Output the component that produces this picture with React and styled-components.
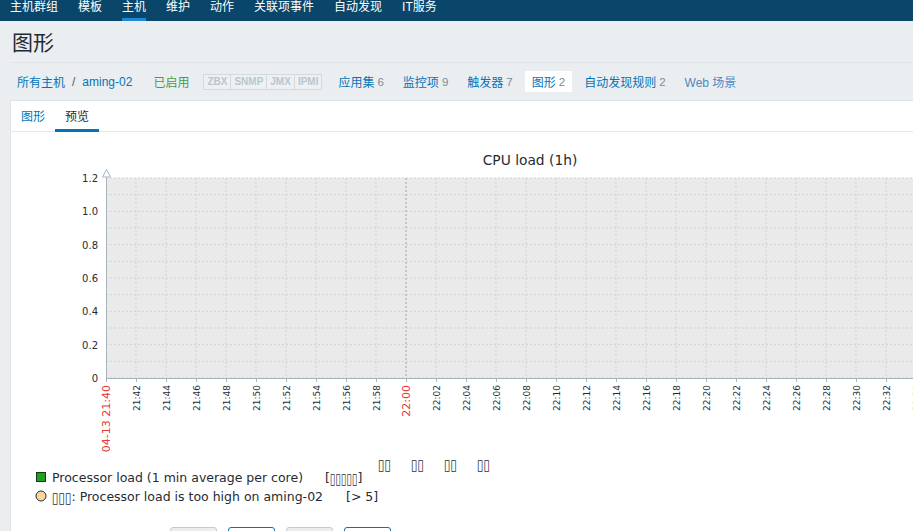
import React from 'react'
import styled, { createGlobalStyle, css } from 'styled-components'

const GlobalStyle = createGlobalStyle`
  body {
    margin: 0;
    background: #ebeef0;
    overflow: hidden;
    font-family: "Liberation Sans", Arial, "Noto Sans CJK SC", sans-serif;
    font-size: 12px;
    color: #1f2c33;
  }
`

const TopNav = styled.ul`
  display: flex;
  margin: 0;
  padding: 0;
  list-style: none;
  height: 21px;
  background: #0a466a;
`

const TopItem = styled.li`
  position: relative;
  padding: 0 10px;
  color: #fff;
  line-height: 14px;
  white-space: nowrap;

  ${p => p.$active && css`
    &::after {
      content: '';
      position: absolute;
      left: 0;
      right: 0;
      bottom: 0;
      margin: 0 10px;
      height: 3px;
      background: #1e88d0;
    }
  `}
`

const Header = styled.div`
  margin-left: 10px;
  border-bottom: 1px solid #dfe4e7;
  height: 41px;
`

const Title = styled.h1`
  margin: 0;
  padding: 10px 0 0 2px;
  font-size: 21px;
  line-height: 24px;
  font-weight: normal;
  color: #1f2c33;
`

const FilterRow = styled.div`
  display: flex;
  align-items: center;
  gap: 5px;
  height: 37px;
  padding-left: 10px;
`

const Crumbs = styled.div`
  display: flex;
  align-items: center;
  margin-right: 2px;
`

const Sep = styled.span`
  color: #5a5a5a;
`

const Item = styled.span`
  display: inline-flex;
  align-items: center;
  height: 21px;
  padding: 0 7px;
  color: ${p => p.$color || '#0275b8'};
  white-space: nowrap;
  background: ${p => (p.$active ? '#fff' : 'transparent')};
`

const Count = styled.span`
  margin-left: 3px;
  font-size: 11.5px;
  color: #768d99;
`

const Status = styled.div`
  display: flex;
  height: 14px;
  margin: 0 4px 0 2px;
  border: 1px solid #d3dade;
`

const StatusCell = styled.span`
  display: flex;
  align-items: center;
  padding: 0 3px;
  background: #eef1f3;
  color: #b9c6cd;
  font-size: 10px;
  font-weight: bold;
  & + & {
    border-left: 1px solid #d3dade;
  }
`

const Panel = styled.div`
  margin-left: 10px;
  background: #fff;
  border-left: 1px solid #dfe4e7;
  border-top: 1px solid #dfe4e7;
  height: 440px;
`

const Tabs = styled.ul`
  display: flex;
  margin: 0;
  padding: 0;
  list-style: none;
  height: 30px;
  border-bottom: 1px solid #e3e8eb;
`

const Tab = styled.li`
  display: flex;
  align-items: center;
  padding: 0 10px;
  color: ${p => (p.$active ? '#1f2c33' : '#0275b8')};
  border-bottom: 3px solid ${p => (p.$active ? '#0275b8' : 'transparent')};
  margin-bottom: -1px;
  padding-top: 1px;
`

const ChartSvg = styled.svg`
  display: block;
  font-family: "DejaVu Sans", sans-serif;
`

const Buttons = styled.div`
  display: flex;
  gap: 11px;
  margin: 5px 0 0 159px;
`

const Btn = styled.button`
  width: 47px;
  height: 24px;
  border-radius: 3px;
  border: 1px solid ${p => (p.$primary ? '#0275b8' : '#c5cbcf')};
  background: ${p => (p.$primary ? '#fff' : '#ebeef0')};
  font: inherit;
`

const TOP = ['主机群组', '模板', '主机', '维护', '动作', '关联项事件', '自动发现', 'IT服务']

const X0 = 106
const PLOT_TOP = 178
const PLOT_BOTTOM = 378
const STEP = 30
const INK = '#1f2c33'

const timeLabel = k => {
  const m = 40 + 2 * k
  const h = 21 + Math.floor(m / 60)
  return `${h}:${String(m % 60).padStart(2, '0')}`
}

// missing-glyph boxes, as the server rendered the CJK legend text
const Tofu = ({ n, w = 6.5, dy = 0 }) => (
  <tspan fontSize="15" dy={dy} textLength={n * w} lengthAdjust="spacingAndGlyphs">
    {'▯'.repeat(n)}
  </tspan>
)

const Chart = () => {
  const cols = Array.from({ length: 28 }, (_, k) => X0 + STEP * k)
  const rows = Array.from({ length: 13 }, (_, k) => PLOT_TOP + (k * (PLOT_BOTTOM - PLOT_TOP)) / 12)
  const yLabels = ['1.2', '1.0', '0.8', '0.6', '0.4', '0.2', '0']

  return (
    <ChartSvg width="902" height="390" viewBox="11 132 902 390">
      <text x="530" y="165" fontSize="13.8" textAnchor="middle" fill={INK}>CPU load (1h)</text>

      <rect x={X0} y={PLOT_TOP} width="820" height={PLOT_BOTTOM - PLOT_TOP} fill="#eaeaea" />

      {rows.map(y => (
        <line key={y} x1={X0} x2="930" y1={y} y2={y} stroke="#c9d3d9" strokeDasharray="2 2" />
      ))}
      {cols.slice(1).map((x, i) => (
        <line key={x} x1={x} x2={x} y1={PLOT_TOP} y2={PLOT_BOTTOM}
          stroke={i + 1 === 10 ? '#97a8b3' : '#c9d3d9'} strokeDasharray="2 2" />
      ))}

      <line x1={X0 + 0.5} x2={X0 + 0.5} y1="170" y2="382" stroke="#a9b5bd" />
      <polygon points="102.5,177 106.5,169.5 110.5,177" fill="#fff" stroke="#a9b5bd" />
      <line x1={X0} x2="930" y1={PLOT_BOTTOM + 0.5} y2={PLOT_BOTTOM + 0.5} stroke="#a9b5bd" />
      {cols.map(x => (
        <line key={'t' + x} x1={x + 0.5} x2={x + 0.5} y1={PLOT_BOTTOM} y2="382" stroke="#a9b5bd" />
      ))}

      {yLabels.map((l, i) => (
        <text key={l} x="98" y={PLOT_TOP + i * 33.33 + 4} fontSize="10" textAnchor="end" fill={INK}>{l}</text>
      ))}

      {cols.map((x, k) => {
        const red = k === 0 || k === 10
        const label = k === 0 ? '04-13 21:40' : timeLabel(k)
        const bx = x + 4
        return (
          <text key={'l' + x} x={bx} y="385" fontSize={red ? 11 : 9} textAnchor="end"
            fill={red ? '#e5393a' : INK} transform={`rotate(-90 ${bx} 385)`}>
            {label}
          </text>
        )
      })}

      {[378, 411, 444, 477].map(x => (
        <text key={'h' + x} x={x} y={470} fill={INK}><Tofu n={2} /></text>
      ))}

      <rect x="36.5" y="472.5" width="9" height="9" fill="#1fa01f" stroke="#0f3a0f" />
      <text x="52" y="481.5" fontSize="12.5" fill={INK}>Processor load (1 min average per core)</text>
      <text x="325" y="481.5" fontSize="12.5" fill={INK}>
        [<Tofu n={5} w={5.5} dy={2.5} /><tspan dy={-2.5}>]</tspan>
      </text>

      <circle cx="41" cy="496" r="5" fill="#ffd699" stroke={INK} />
      <text x="52" y="503" fontSize="12.5" fill={INK}>
        <Tofu n={3} /><tspan dy={-2.5}>: Processor load is too high on aming-02</tspan>
      </text>
      <text x="346" y="500.5" fontSize="12.5" fill={INK}>[&gt; 5]</text>
    </ChartSvg>
  )
}

export default function App() {
  return (
    <>
      <GlobalStyle />
      <TopNav>
        {TOP.map(t => (
          <TopItem key={t} $active={t === '主机'}>{t}</TopItem>
        ))}
      </TopNav>

      <Header>
        <Title>图形</Title>
      </Header>

      <FilterRow>
        <Crumbs>
          <Item>所有主机</Item>
          <Sep>/</Sep>
          <Item>aming-02</Item>
        </Crumbs>
        <Item $color="#429e47">已启用</Item>
        <Status>
          <StatusCell>ZBX</StatusCell>
          <StatusCell>SNMP</StatusCell>
          <StatusCell>JMX</StatusCell>
          <StatusCell>IPMI</StatusCell>
        </Status>
        <Item>应用集<Count>6</Count></Item>
        <Item>监控项<Count>9</Count></Item>
        <Item>触发器<Count>7</Count></Item>
        <Item $active>图形<Count>2</Count></Item>
        <Item>自动发现规则<Count>2</Count></Item>
        <Item $color="#4f88c0">Web 场景</Item>
      </FilterRow>

      <Panel>
        <Tabs>
          <Tab>图形</Tab>
          <Tab $active>预览</Tab>
        </Tabs>
        <Chart />
        <Buttons>
          <Btn />
          <Btn $primary />
          <Btn />
          <Btn $primary />
        </Buttons>
      </Panel>
    </>
  )
}
